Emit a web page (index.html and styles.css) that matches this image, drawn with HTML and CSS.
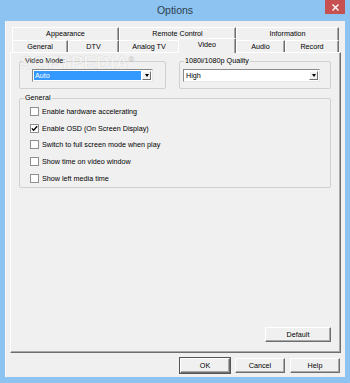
FILE: index.html
```html
<!DOCTYPE html>
<html lang="en">
<head>
  <meta charset="UTF-8" />
  <title>Options</title>
  <link rel="stylesheet" href="styles.css">
</head>
<body>
  <div class="titlebar">
    <span class="title">Options</span>
    <div class="close-btn">
      <svg width="7" height="7" viewBox="0 0 7 7"><path d="M0.5 0.5 L6.5 6.5 M6.5 0.5 L0.5 6.5" stroke="#fff" stroke-width="1.4" /></svg>
    </div>
  </div>

  <div class="client">
    <div class="tab-row">
      <div class="tab" style="width:107px">Appearance</div>
      <div class="tab" style="width:117px">Remote Control</div>
      <div class="tab" style="width:103px">Information</div>
    </div>
    <div class="tab-row front">
      <div class="tab" style="width:56px">General</div>
      <div class="tab" style="width:51px">DTV</div>
      <div class="tab no-sep" style="width:59px">Analog TV</div>
      <div class="tab active" style="width:58px">Video</div>
      <div class="tab" style="width:49px">Audio</div>
      <div class="tab" style="width:54px">Record</div>
    </div>

    <div class="panel">
      <div class="group-line">
        <div class="group video-mode">
          <span class="group-label">Video Mode:</span>
          <div class="combo wide">
            <span class="combo-text selected">Auto</span>
            <span class="combo-btn"><i class="arrow"></i></span>
          </div>
        </div>
        <div class="group quality">
          <span class="group-label">1080i/1080p Quality</span>
          <div class="combo narrow">
            <span class="combo-text">High</span>
            <span class="combo-btn"><i class="arrow"></i></span>
          </div>
        </div>
      </div>

      <div class="group general">
        <span class="group-label">General</span>
        <div class="check-row"><span class="check"></span>Enable hardware accelerating</div>
        <div class="check-row"><span class="check"><svg width="7" height="7" viewBox="0 0 7 7"><path d="M0.8 3.4 L2.6 5.3 L6.2 1.2" fill="none" stroke="#000" stroke-width="1.3" /></svg></span>Enable OSD (On Screen Display)</div>
        <div class="check-row"><span class="check"></span>Switch to full screen mode when play</div>
        <div class="check-row"><span class="check"></span>Show time on video window</div>
        <div class="check-row"><span class="check"></span>Show left media time</div>
      </div>

      <button class="btn default-btn">Default</button>
    </div>

    <div class="footer">
      <button class="btn ok">OK</button>
      <button class="btn">Cancel</button>
      <button class="btn">Help</button>
    </div>
  </div>

  <div class="watermark">SOFTPEDIA<sup>®</sup></div>
</body>
</html>
```

FILE: styles.css
```css
* {
  box-sizing: border-box;
  font-family: 'Liberation Sans', Arial, sans-serif;
}

body {
  margin: 0;
  width: 350px;
  height: 383px;
  background: #8cc3f1;
  position: relative;
  overflow: hidden;
}

.titlebar {
  height: 21px;
  display: flex;
  padding-left: 25px;
}

.title {
  flex: 1;
  text-align: center;
  font-size: 10.5px;
  line-height: 21px;
  color: #2e3d4f;
}

.close-btn {
  width: 20px;
  height: 14px;
  margin-right: 5px;
  background: #c75050;
  display: flex;
  align-items: center;
  justify-content: center;
}

.client {
  margin: 0 5px;
  height: 356px;
  background: #f0f0f0;
  padding: 6px 4px 4px 4px;
  display: flex;
  flex-direction: column;
  font-size: 7.2px;
  color: #000;
  border-left: 1px solid #f8f8f8;
}

.tab-row {
  display: flex;
  height: 13px;
  margin-left: 2px;
}

.tab-row.front {
  height: 12px;
}

.tab {
  height: 100%;
  text-align: center;
  line-height: 12px;
  border-top: 1px solid #fff;
  border-left: 1px solid #fff;
  border-right: 1px solid #6e6e6e;
  box-shadow: inset -1px 0 0 #a8a8a8;
  white-space: nowrap;
}

.tab.no-sep {
  border-right: none;
  box-shadow: none;
}

.tab.active {
  margin-top: -2px;
  height: 15px;
  line-height: 11px;
  background: #f0f0f0;
  position: relative;
  z-index: 1;
}

.panel {
  height: 301px;
  border-top: 1px solid #fff;
  border-left: 1px solid #fff;
  border-right: 1px solid #6e6e6e;
  border-bottom: 1px solid #6e6e6e;
  box-shadow: inset -1px -1px 0 #a8a8a8;
  padding: 8px 9px 10px 8px;
  display: flex;
  flex-direction: column;
}

.group-line {
  display: flex;
  gap: 13px;
}

.group {
  border: 1px solid #d0d0d0;
  border-radius: 2px;
  display: flex;
  flex-direction: column;
}

.group-label {
  align-self: flex-start;
  margin: -6px 0 0 4px;
  padding: 0 1px;
  line-height: 10px;
  background: #f0f0f0;
}

.video-mode {
  width: 147px;
  height: 28px;
}

.quality {
  flex: 1;
  height: 28px;
}

.combo {
  margin-top: 3px;
  height: 13px;
  display: flex;
  background: #fff;
  border: 1px solid;
  border-color: #8a8a8a #e6e6e6 #e6e6e6 #8a8a8a;
  padding: 1px;
}

.combo.wide {
  width: 121px;
  margin-left: 12px;
}

.combo.narrow {
  width: 137px;
  margin-left: 3px;
}

.combo-text {
  flex: 1;
  line-height: 9px;
  padding-left: 1px;
}

.combo-text.selected {
  background: #3399ff;
  color: #fff;
  margin-right: 1px;
}

.combo-btn {
  width: 9px;
  background: #f0f0f0;
  border: 1px solid;
  border-color: #fff #6e6e6e #6e6e6e #fff;
  display: flex;
  align-items: center;
  justify-content: center;
}

.arrow {
  width: 0;
  height: 0;
  border-left: 2.5px solid transparent;
  border-right: 2.5px solid transparent;
  border-top: 3px solid #000;
}

.general {
  margin-top: 9px;
  height: 90px;
}

.check-row {
  height: 16.7px;
  display: flex;
  align-items: center;
  padding-left: 10px;
  white-space: nowrap;
}

.check {
  width: 9px;
  height: 9px;
  margin-right: 3px;
  background: #fff;
  border: 1px solid #8e8f8f;
  display: flex;
  align-items: center;
  justify-content: center;
}

.btn {
  width: 50px;
  height: 15px;
  padding: 0;
  font-size: 7.2px;
  color: #000;
  background: #f0f0f0;
  border: 1px solid;
  border-color: #fff #6e6e6e #6e6e6e #fff;
  box-shadow: inset -1px -1px 0 #a8a8a8;
}

.default-btn {
  width: 66px;
  margin-top: auto;
  align-self: flex-end;
}

.btn.ok {
  box-shadow: inset -1px -1px 0 #a8a8a8, 0 0 0 1px #555;
}

.footer {
  margin-top: 5px;
  display: flex;
  justify-content: flex-end;
  gap: 5px;
  padding-right: 1px;
}

.watermark {
  position: absolute;
  left: 20px;
  top: 53px;
  font-size: 19px;
  line-height: 1;
  font-weight: bold;
  color: rgba(255, 255, 255, 0.35);
  -webkit-text-stroke: 0.5px rgba(150, 150, 150, 0.3);
  pointer-events: none;
}

.watermark sup {
  font-size: 7px;
}
```
